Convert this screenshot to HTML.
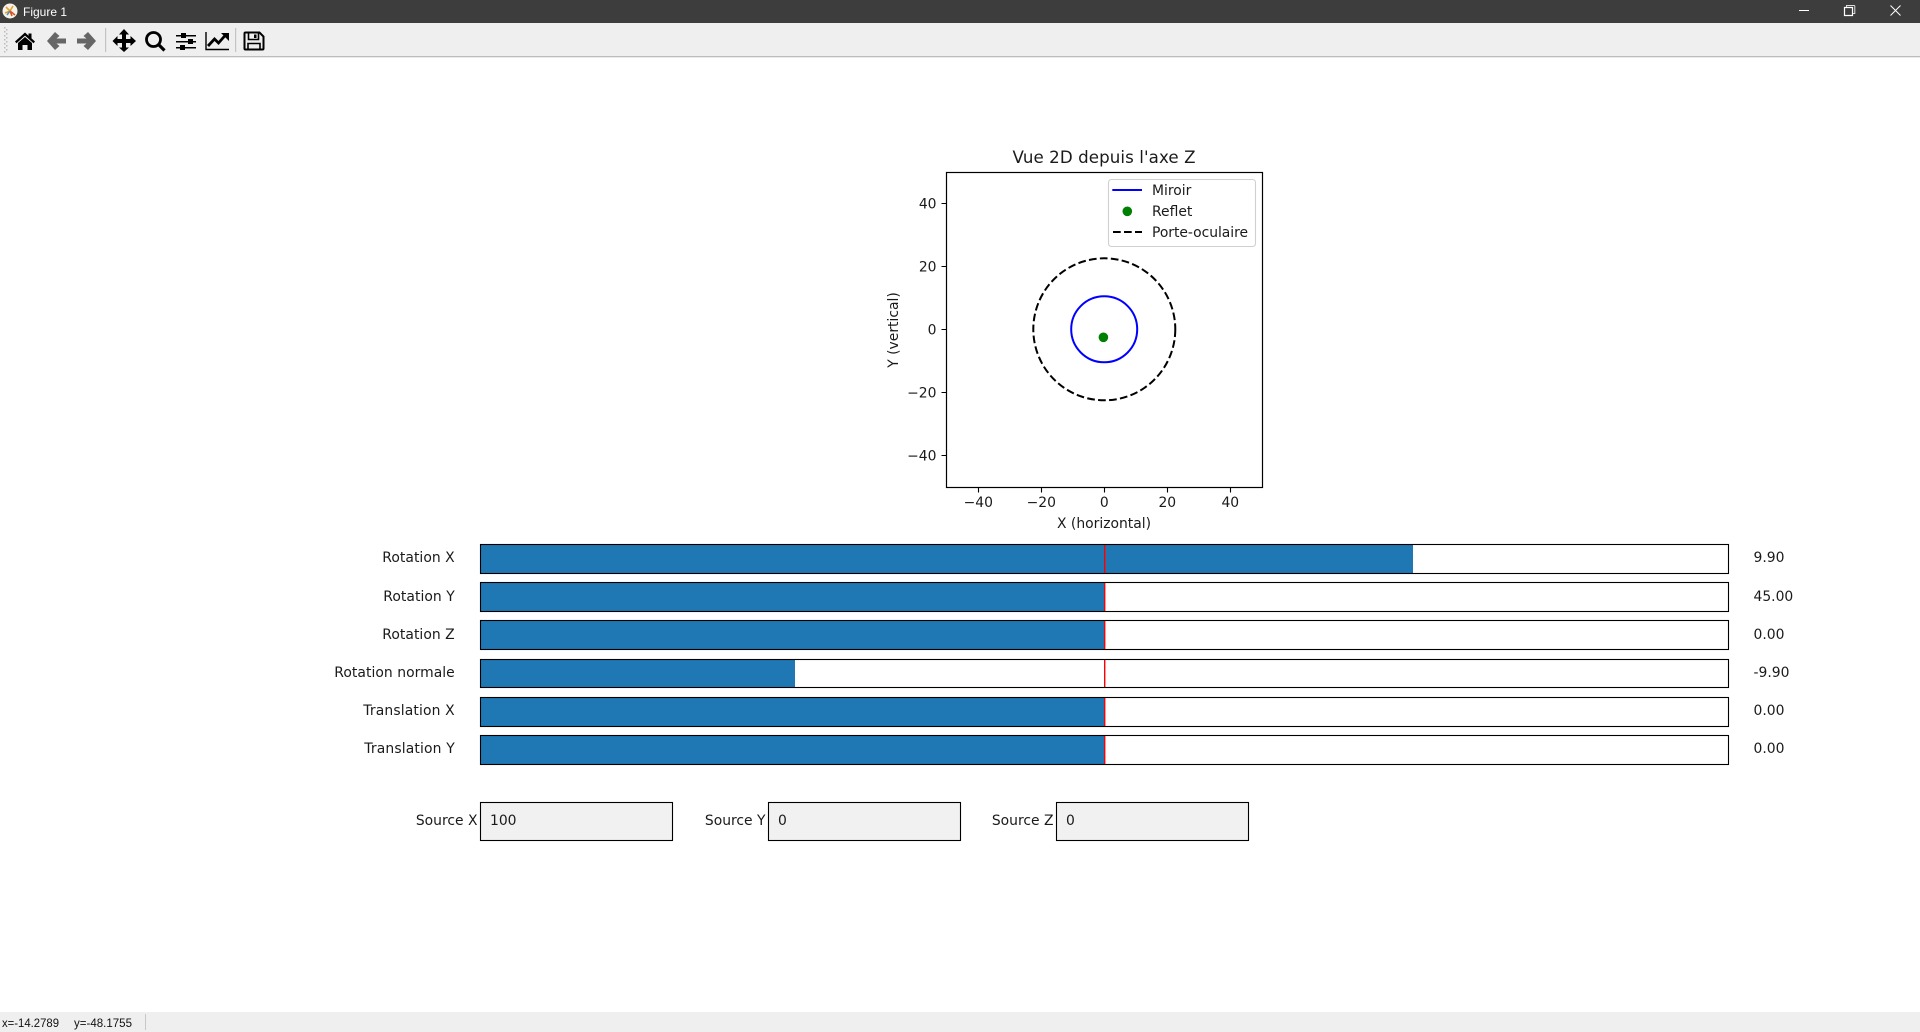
<!DOCTYPE html>
<html lang="fr">
<head>
<meta charset="utf-8">
<title>Figure 1</title>
<style>
html,body{margin:0;padding:0;background:#fff;width:1920px;height:1032px;overflow:hidden}
svg{display:block;position:absolute;left:0;top:0}
.m{font-family:"DejaVu Sans",sans-serif;font-size:13.9px;fill:#1a1a1a}
.e{text-anchor:end}
.c{text-anchor:middle}
.w{font-family:"Liberation Sans",Arial,sans-serif}
</style>
</head>
<body>
<svg width="1920" height="1032" viewBox="0 0 1920 1032" xmlns="http://www.w3.org/2000/svg">
<!-- title bar -->
<rect x="0" y="0" width="1920" height="23" fill="#3d3d3d"/>
<circle cx="10" cy="11" r="7.5" fill="#f6f2ea"/>
<path d="M10 11L6 7M10 11L13 6M10 11L5 13" stroke="#e8a02a" stroke-width="1.600" fill="none"/>
<path d="M10 11L15 15M10 11L12 16" stroke="#d9531e" stroke-width="1.600" fill="none"/>
<path d="M10 11L7 15" stroke="#4f8fc0" stroke-width="1.600" fill="none"/>
<text x="23" y="16" class="w" font-size="12" fill="#fff">Figure 1</text>
<path d="M1799 10.5H1809" stroke="#fff" stroke-width="1"/>
<path d="M1844.500 7.500h8v8h-8z" fill="none" stroke="#fff" stroke-width="1.200"/>
<path d="M1846.500 7v-1.500h7.500a.8.800 0 0 1 .8.800v7.200h-1.800" fill="none" stroke="#ddd" stroke-width="1"/>
<path d="M1890.500 5.500l10 10M1900.500 5.500l-10 10" stroke="#fff" stroke-width="1"/>

<!-- toolbar -->
<rect x="0" y="23" width="1920" height="33" fill="#efefef"/>
<rect x="0" y="56" width="1920" height="1.300" fill="#bcbcbc"/>
<g fill="#bdbdbd">
<rect x="4" y="27" width="1.500" height="1.500"/><rect x="6" y="29" width="1.500" height="1.500"/>
<rect x="4" y="31" width="1.500" height="1.500"/><rect x="6" y="33" width="1.500" height="1.500"/>
<rect x="4" y="35" width="1.500" height="1.500"/><rect x="6" y="37" width="1.500" height="1.500"/>
<rect x="4" y="39" width="1.500" height="1.500"/><rect x="6" y="41" width="1.500" height="1.500"/>
<rect x="4" y="43" width="1.500" height="1.500"/><rect x="6" y="45" width="1.500" height="1.500"/>
<rect x="4" y="47" width="1.500" height="1.500"/><rect x="6" y="49" width="1.500" height="1.500"/>
<rect x="4" y="51" width="1.500" height="1.500"/>
</g>
<!-- home -->
<path d="M15 41.500L25 32.500L28.500 35.700V33.500H31.500V38.400L35 41.500L33.500 43.200L25 35.600L16.500 43.200Z" fill="#000"/>
<path d="M18 43L25 37L32 43V50H27.500V45H22.500V50H18Z" fill="#000"/>
<!-- back -->
<path d="M55 32L47 41L55 50L59.500 46L56.500 43.500H66V38.500H56.500L59.500 36Z" fill="#666"/>
<!-- forward -->
<path d="M88 32L96 41L88 50L83.500 46L86.500 43.500H77V38.500H86.500L83.500 36Z" fill="#666"/>
<rect x="105" y="28" width="1.200" height="24" fill="#c4c4c4"/>
<!-- move -->
<path d="M124 29L129 34.500H126V39H130.500V36L136 41L130.500 46V43H126V47.500H129L124 52L119 47.500H122V43H117.500V46L112.500 41L117.500 36V39H122V34.500H119Z" fill="#000"/>
<!-- zoom -->
<circle cx="153.500" cy="39.500" r="7" fill="none" stroke="#000" stroke-width="2.800"/>
<path d="M158.500 44.500L164.500 50.500" stroke="#000" stroke-width="3.200" fill="none"/>
<!-- sliders -->
<g fill="#000">
<rect x="176" y="35" width="20" height="1.500"/><rect x="181" y="33" width="5" height="5"/>
<rect x="176" y="41" width="20" height="1.500"/><rect x="188" y="39" width="5" height="5"/>
<rect x="176" y="47" width="20" height="1.500"/><rect x="180" y="45" width="5" height="5"/>
</g>
<!-- chart -->
<path d="M206 32V49.500H229" fill="none" stroke="#000" stroke-width="1.400"/>
<path d="M208 46L214.500 39L218.500 43L226 34.500" fill="none" stroke="#000" stroke-width="2.800"/>
<path d="M221 33H229V41Z" fill="#000"/>
<rect x="235" y="28" width="1.200" height="24" fill="#c4c4c4"/>
<!-- save -->
<path d="M245.500 32.500H259.500L263.500 36.500V48.500a1 1 0 0 1-1 1H245.500a1 1 0 0 1-1-1V33.500a1 1 0 0 1 1-1Z" fill="none" stroke="#000" stroke-width="2"/>
<path d="M248.500 33V39.500H258.500V33" fill="none" stroke="#000" stroke-width="1.600"/>
<rect x="254" y="34.500" width="2.500" height="3.500" fill="#000"/>
<path d="M248 49V43.500H260V49" fill="none" stroke="#000" stroke-width="1.600"/>

<!-- plot -->
<text x="1104" y="163" class="m c" style="font-size:16.67px" textLength="183">Vue 2D depuis l'axe Z</text>
<rect x="946.500" y="172.500" width="316" height="315" fill="#fff" stroke="#000" stroke-width="1.200"/>
<g stroke="#000" stroke-width="1.100" fill="none">
<path d="M978.500 487.500v5M1041.500 487.500v5M1104.500 487.500v5M1167.500 487.500v5M1230.500 487.500v5"/>
<path d="M946.500 203.500h-5M946.500 266.500h-5M946.500 329.500h-5M946.500 392.500h-5M946.500 455.500h-5"/>
</g>
<g class="m c">
<text x="978.300" y="507">−40</text>
<text x="1041.300" y="507">−20</text>
<text x="1104.300" y="507">0</text>
<text x="1167.300" y="507">20</text>
<text x="1230.300" y="507">40</text>
</g>
<g class="m e">
<text x="936.500" y="208.500">40</text>
<text x="936.500" y="271.500">20</text>
<text x="936.500" y="334.500">0</text>
<text x="936.500" y="397.500">−20</text>
<text x="936.500" y="460.500">−40</text>
</g>
<text x="1104" y="528" class="m c">X (horizontal)</text>
<text transform="translate(898 330) rotate(-90)" class="m c">Y (vertical)</text>
<circle cx="1104.300" cy="329.300" r="71" fill="none" stroke="#000" stroke-width="2" stroke-dasharray="7.700 3.300"/>
<circle cx="1104.200" cy="329.300" r="33" fill="none" stroke="#0000ff" stroke-width="2"/>
<circle cx="1103.400" cy="337.300" r="4.800" fill="#008000"/>
<!-- legend -->
<rect x="1108.500" y="179.500" width="147" height="67" rx="3" ry="3" fill="#fff" fill-opacity=".85" stroke="#d0d0d0" stroke-width="1.100"/>
<path d="M1112.300 190H1142" stroke="#0000ff" stroke-width="2.080"/>
<circle cx="1127.300" cy="211.300" r="4.800" fill="#008000"/>
<path d="M1113 232H1142" stroke="#000" stroke-width="2.080" stroke-dasharray="7.700 3.300"/>
<text x="1152" y="195" class="m">Miroir</text>
<text x="1152" y="216" class="m">Reflet</text>
<text x="1152" y="237" class="m" textLength="96">Porte-oculaire</text>

<!-- sliders -->
<g class="m e">
<text x="454.700" y="562" textLength="72.400">Rotation X</text>
<text x="454.700" y="601" textLength="71.400">Rotation Y</text>
<text x="454.700" y="639" textLength="72.400">Rotation Z</text>
<text x="454.700" y="677" textLength="120.400">Rotation normale</text>
<text x="454.700" y="715" textLength="91.400">Translation X</text>
<text x="454.700" y="753" textLength="90.400">Translation Y</text>
</g>
<g class="m">
<text x="1753.500" y="562">9.90</text>
<text x="1753.500" y="601">45.00</text>
<text x="1753.500" y="639">0.00</text>
<text x="1753.500" y="677">-9.90</text>
<text x="1753.500" y="715">0.00</text>
<text x="1753.500" y="753">0.00</text>
</g>
<g fill="#1f77b4">
<rect x="480.500" y="544.500" width="932.500" height="29"/>
<rect x="480.500" y="582.500" width="624" height="29"/>
<rect x="480.500" y="620.500" width="624" height="29"/>
<rect x="480.500" y="659.500" width="314.500" height="28"/>
<rect x="480.500" y="697.500" width="624" height="29"/>
<rect x="480.500" y="735.500" width="624" height="29"/>
</g>
<g fill="#ff0000">
<rect x="1104" y="545" width="1.400" height="28"/>
<rect x="1104" y="583" width="1.400" height="28"/>
<rect x="1104" y="621" width="1.400" height="28"/>
<rect x="1104" y="660" width="1.400" height="27"/>
<rect x="1104" y="698" width="1.400" height="28"/>
<rect x="1104" y="736" width="1.400" height="28"/>
</g>
<g fill="none" stroke="#000" stroke-width="1.100">
<rect x="480.500" y="544.500" width="1248" height="29"/>
<rect x="480.500" y="582.500" width="1248" height="29"/>
<rect x="480.500" y="620.500" width="1248" height="29"/>
<rect x="480.500" y="659.500" width="1248" height="28"/>
<rect x="480.500" y="697.500" width="1248" height="29"/>
<rect x="480.500" y="735.500" width="1248" height="29"/>
</g>

<!-- text boxes -->
<g fill="#f1f1f1" stroke="#000" stroke-width="1.100">
<rect x="480.500" y="802.500" width="192" height="38"/>
<rect x="768.500" y="802.500" width="192" height="38"/>
<rect x="1056.500" y="802.500" width="192" height="38"/>
</g>
<g class="m e">
<text x="477.500" y="825">Source X</text>
<text x="765.500" y="825">Source Y</text>
<text x="1053.500" y="825">Source Z</text>
</g>
<g class="m">
<text x="490" y="825">100</text>
<text x="778" y="825">0</text>
<text x="1066" y="825">0</text>
</g>

<!-- status bar -->
<rect x="0" y="1012" width="1920" height="20" fill="#efefef"/>
<text x="2" y="1027" class="w" font-size="11.500" fill="#111" textLength="57" lengthAdjust="spacingAndGlyphs">x=-14.2789</text>
<text x="74" y="1027" class="w" font-size="11.500" fill="#111" textLength="58" lengthAdjust="spacingAndGlyphs">y=-48.1755</text>
<rect x="145" y="1014" width="1" height="16" fill="#c8c8c8"/>
</svg>
</body>
</html>
